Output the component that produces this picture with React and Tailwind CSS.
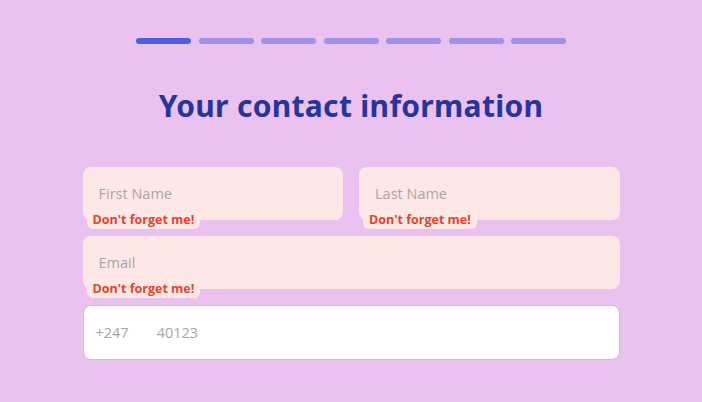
import React from 'react';

const steps = [0, 1, 2, 3, 4, 5, 6];

const Field = ({ placeholder, className = '' }) => (
  <div className={`relative ${className}`}>
    <div className="h-[53px] rounded-lg bg-[#fde8e7] flex items-center px-4 text-[14.5px] text-[#a9a5a5]">
      {placeholder}
    </div>
    <div className="absolute left-[4px] top-[44px] rounded-b-md bg-[#fde8e7] px-[6px] pt-[1px] pb-[1px] text-[12.5px] font-bold leading-[16px] text-[#e2452d]">
      Don't forget me!
    </div>
  </div>
);

export default function App() {
  return (
    <div
      className="w-[702px] h-[402px] bg-[#ebc1ef] overflow-hidden"
      style={{ fontFamily: '"Open Sans", "Liberation Sans", sans-serif' }}
    >
      <div className="flex justify-center gap-[7.5px] pt-[38px]">
        {steps.map((s) => (
          <div
            key={s}
            className={`h-[6px] w-[55px] rounded-full ${s === 0 ? 'bg-[#4f5de3]' : 'bg-[#9e91e8]'}`}
          />
        ))}
      </div>

      <h1
        className="mt-[44px] text-center text-[30px] font-bold leading-[36px] tracking-[0.3px] text-[#26359b]"
        style={{ fontFamily: '"Noto Sans", sans-serif' }}
      >
        Your contact information
      </h1>

      <div className="mx-auto mt-[43px] w-[537px] flex flex-col gap-[16px]">
        <div className="grid grid-cols-2 gap-[16px]">
          <Field placeholder="First Name" />
          <Field placeholder="Last Name" />
        </div>
        <Field placeholder="Email" />
        <div className="h-[55px] rounded-lg bg-white border border-[#cbbfcc] flex items-center px-[12px] text-[14.5px] text-[#a9a5a5]">
          <span>+247</span>
          <span className="ml-[28px]">40123</span>
        </div>
      </div>
    </div>
  );
}
